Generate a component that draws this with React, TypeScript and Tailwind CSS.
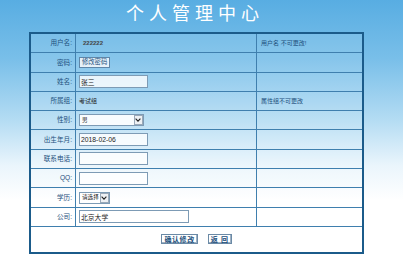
import type { ReactNode } from 'react';

const FONT = "font-['Liberation_Sans','Noto_Sans_CJK_SC',sans-serif]";

function Row({ label, children, note }: { label: string; children?: ReactNode; note?: string }) {
  return (
    <div className="flex h-[19.3px] border-b border-[#3f7fae]">
      <div className="w-[45px] shrink-0 border-r border-[#3f7fae] flex items-center justify-end pr-[3px] text-[6.6px] text-[#1d4f7c]">
        {label}
      </div>
      <div className="w-[181px] shrink-0 border-r border-[#3f7fae] flex items-center pl-[3px] text-[6.6px] text-[#222]">
        {children}
      </div>
      <div className="flex-1 flex items-center pl-[4px] text-[6px] text-[#1d4f7c]">{note}</div>
    </div>
  );
}

function Field({ value = '', w = 'w-[69px]' }: { value?: string; w?: string }) {
  return (
    <input
      readOnly
      value={value}
      className={`${w} h-[13px] border border-[#7d9bb5] bg-white/80 px-[1px] text-[6.8px] text-[#222] outline-none`}
    />
  );
}

function Select({ value, w }: { value: string; w: string }) {
  return (
    <div className={`${w} h-[12px] border border-[#7d9bb5] bg-white/90 flex items-center justify-between whitespace-nowrap overflow-hidden`}>
      <span className="pl-[2px] text-[5.6px] text-[#222]">{value}</span>
      <span className="w-[9px] h-[10px] shrink-0 mr-[0.5px] border border-[#9aa9b8] bg-[#eef1f4] flex items-center justify-center">
        <svg width="6" height="4" viewBox="0 0 6 4">
          <path d="M0.6 0.6 L3 3.2 L5.4 0.6" fill="none" stroke="#222" strokeWidth="1.1" />
        </svg>
      </span>
    </div>
  );
}

function Btn({ children }: { children: ReactNode }) {
  return (
    <button className="h-[10px] px-[2px] border border-[#6b8aa6] bg-white text-[7px] font-bold text-[#1d4f7c] leading-none tracking-[0.6px] whitespace-nowrap shadow-[inset_-1px_-1px_0_#9fb1c3]">
      {children}
    </button>
  );
}

export default function App() {
  return (
    <div
      className={`${FONT} w-[403px] h-[267px] overflow-hidden bg-[linear-gradient(180deg,#58ade2_0%,#79bfe9_22%,#b4dcf3_45%,#eaf5fc_62%,#ffffff_75%,#ffffff_100%)]`}
    >
      <h1 className="h-[32px] flex items-center justify-center pr-[18px] pb-[4px] text-[18px] text-white leading-none">
        个 人 管 理 中 心
      </h1>
      <div className="ml-[29px] w-[335px] border-2 border-[#1b5b8a] bg-white/10">
        <Row label="用户名:" note="用户名 不可更改!">
          <span className="font-bold text-[6px] text-[#444] pl-[4px]">222222</span>
        </Row>
        <Row label="密码:">
          <button className="h-[11px] px-[2px] border border-[#5f86a8] bg-[#e6f1f9] text-[6.3px] text-[#1d4f7c] leading-none">
            修改密码
          </button>
        </Row>
        <Row label="姓名:">
          <Field value="张三" />
        </Row>
        <Row label="所属组:" note="属性组不可更改">
          <span className="text-[6px]">考试组</span>
        </Row>
        <Row label="性别:">
          <Select value="男" w="w-[65px]" />
        </Row>
        <Row label="出生年月:">
          <Field value="2018-02-06" />
        </Row>
        <Row label="联系电话:">
          <Field />
        </Row>
        <Row label="QQ:">
          <Field />
        </Row>
        <Row label="学历:">
          <Select value="请选择" w="w-[31px]" />
        </Row>
        <Row label="公司:">
          <Field value="北京大学" w="w-[110px]" />
        </Row>
        <div className="h-[25px] flex items-center justify-center gap-[10px]">
          <Btn>确认修改</Btn>
          <Btn>返 回</Btn>
        </div>
      </div>
    </div>
  );
}
